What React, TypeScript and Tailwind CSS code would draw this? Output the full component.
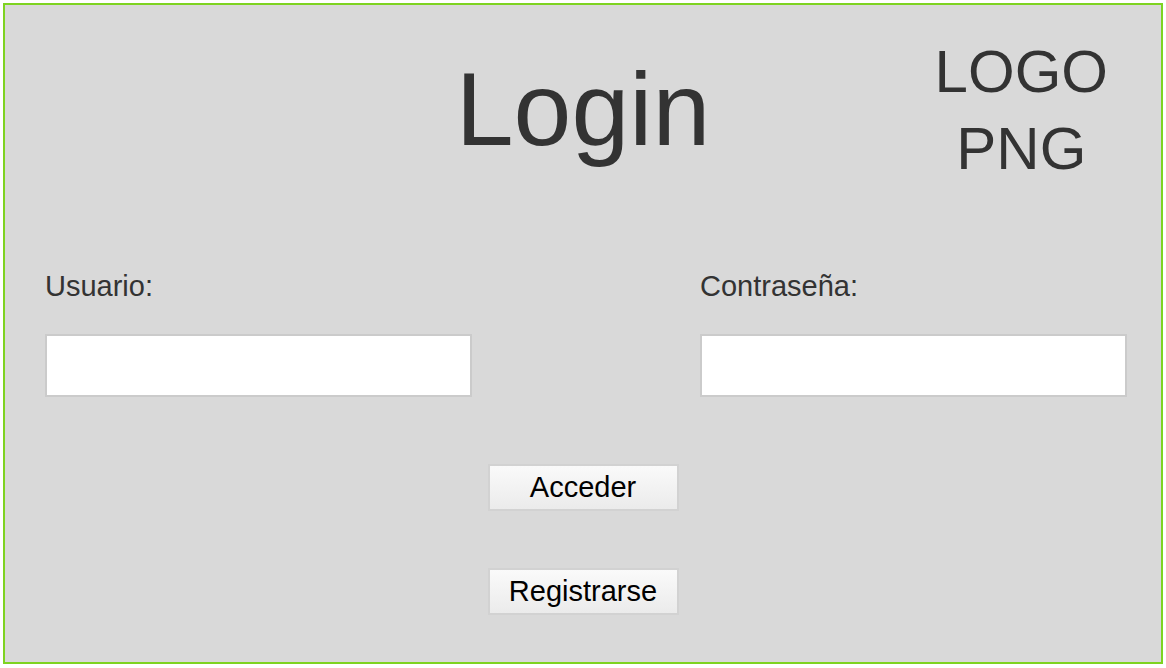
import { FC } from "react";

const font = { fontFamily: '"Liberation Sans", Arial, Helvetica, sans-serif' };

const Field: FC<{ label: string; type?: string }> = ({ label, type = "text" }) => (
  <div className="flex flex-col">
    <label className="text-[29px] leading-[34px] text-[#333333]">{label}</label>
    <input
      type={type}
      className="mt-[31px] h-[63px] w-[427px] border-2 border-[#cbcbcb] bg-white px-3 text-[22px] outline-none"
    />
  </div>
);

const Button: FC<{ children: string }> = ({ children }) => (
  <button className="h-[47px] w-[191px] border-2 border-[#d2d2d2] bg-gradient-to-b from-[#fafafa] to-[#ebebeb] text-[29px] leading-none text-black">
    {children}
  </button>
);

export default function App() {
  return (
    <div className="min-h-[668px] w-[1166px] bg-white p-[3px]" style={font}>
      <div className="flex h-[661px] w-[1160px] flex-col border-2 border-[#7ed321] bg-[#d9d9d9]">
        {/* Header */}
        <div className="grid h-[264px] grid-cols-[1fr_auto_1fr] items-start">
          <div />
          <h1 className="mt-[52px] text-[104px] leading-none text-[#333333]">Login</h1>
          <div className="flex justify-end pr-[53px] pt-[28px]">
            <div className="text-center text-[60px] leading-[77px] text-[#333333]">
              LOGO
              <br />
              PNG
            </div>
          </div>
        </div>

        {/* Fields */}
        <div className="grid grid-cols-[427px_427px] gap-x-[228px] pl-[40px]">
          <Field label="Usuario:" />
          <Field label="Contraseña:" type="password" />
        </div>

        {/* Actions */}
        <div className="mt-[67px] flex flex-col items-center gap-[57px]">
          <Button>Acceder</Button>
          <Button>Registrarse</Button>
        </div>
      </div>
    </div>
  );
}
